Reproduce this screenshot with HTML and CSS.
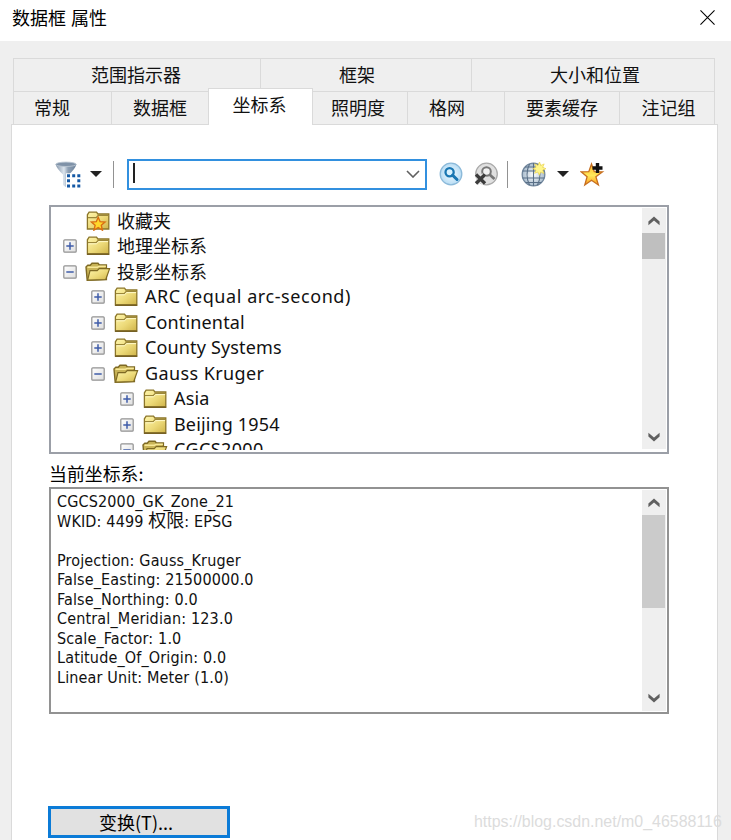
FILE: index.html
```html
<!DOCTYPE html>
<html lang="zh-CN">
<head>
<meta charset="utf-8">
<title>数据框 属性</title>
<link rel="stylesheet" href="styles.css">
</head>
<body>
<svg class="defs" width="0" height="0">
  <defs>
    <linearGradient id="gold" x1="0" y1="0" x2="1" y2="1"><stop offset="0" stop-color="#fff6ac"/><stop offset=".55" stop-color="#ecd978"/><stop offset="1" stop-color="#cfb348"/></linearGradient>
    <linearGradient id="metal"><stop offset="0" stop-color="#8495a9"/><stop offset=".4" stop-color="#dce5ee"/><stop offset=".6" stop-color="#8fa1b5"/><stop offset="1" stop-color="#6d829b"/></linearGradient>
    <linearGradient id="star" x1="0" y1="0" x2="0" y2="1"><stop offset="0" stop-color="#ffb928"/><stop offset=".55" stop-color="#ffe95b"/><stop offset="1" stop-color="#ff9c1c"/></linearGradient>
    <radialGradient id="blue"><stop offset="0" stop-color="#f3fbff"/><stop offset="1" stop-color="#b7dcf4"/></radialGradient>
    <radialGradient id="globe"><stop offset="0" stop-color="#ffffff"/><stop offset="1" stop-color="#a9bccd"/></radialGradient>
    <linearGradient id="box" x1="0" y1="0" x2="1" y2="1"><stop offset="0" stop-color="#fff"/><stop offset="1" stop-color="#dedede"/></linearGradient>
  </defs>
  <symbol id="folder" viewBox="0 0 26 20">
    <path d="M2.4 18V3.8L4.100 1.200h7.400l1.400 1.800h10.900V18z" fill="url(#gold)" stroke="#8c7628" stroke-width="1.3"/>
    <path d="M3 6.600h8.200l2-2.200h10" fill="none" stroke="#9b873a" stroke-width="1.2"/>
    <path d="M3.400 7.800h8.200l2-2.200h9.500" fill="none" stroke="#fff9c8"/>
    <path d="M2 18.200h22.200" stroke="#705b20" stroke-width="1.4"/>
  </symbol>
  <symbol id="folder-open" viewBox="0 0 26 20">
    <path d="M2.200 18.200L1 5 2.800 3.200h2.400L7 1.200h6l1.400 1.800h7v14.600z" fill="#c9b457" stroke="#7e6923" stroke-width="1.4"/>
    <path d="M2.5 5.200h10l2-1h6.400" fill="none" stroke="#f8e898" stroke-width="1.4"/>
    <path d="M2.600 18.200L5 8.600h7.200l2-2h10.400l-3.800 10.900z" fill="url(#gold)" stroke="#7e6923" stroke-width="1.2"/>
  </symbol>
  <symbol id="folder-star" viewBox="0 0 26 20">
    <path d="M2.400 18V3.800L4.100 1.200h7.400l1.400 1.800h10.900V18z" fill="url(#gold)" stroke="#8c7628" stroke-width="1.3"/>
    <path d="M3 6.600h8.200l2-2.200h10" fill="none" stroke="#9b873a" stroke-width="1.2"/>
    <path d="M13.200 6.200l1.900 4.500 4.900.4-3.700 3.200 1.100 4.800-4.200-2.600-4.200 2.600 1.100-4.800-3.700-3.200 4.900-.4z" fill="#ffd82b" stroke="#d96e12" stroke-width="1.400"/>
  </symbol>
  <symbol id="plus" viewBox="0 0 14 14">
    <rect x=".8" y=".8" width="12.400" height="12.400" rx="1" fill="url(#box)" stroke="#929292" stroke-width="1.200"/>
    <path d="M3.300 7h7.400M7 3.300v7.400" stroke="#3f5ca9" stroke-width="1.500"/>
  </symbol>
  <symbol id="minus" viewBox="0 0 14 14">
    <rect x=".8" y=".8" width="12.400" height="12.400" rx="1" fill="url(#box)" stroke="#929292" stroke-width="1.200"/>
    <path d="M3.300 7h7.400" stroke="#3f5ca9" stroke-width="1.500"/>
  </symbol>
  <symbol id="scroll-arrow" viewBox="0 0 12 10"><path d="M.4 9.300V5.600L6 .4l5.600 5.200v3.700L6 4.600z" fill="#606060"/></symbol>
</svg>

<header class="titlebar">
  <h1>数据框 属性</h1>
  <svg class="close" viewBox="0 0 16 16"><path d="M.5.5l15 15M15.5.5l-15 15" stroke="#000" stroke-width="1.150"/></svg>
</header>

<main class="dialog">
  <nav class="tabs tabs-top">
    <span class="tab tab-extent">范围指示器</span><span class="tab tab-frame">框架</span><span class="tab tab-size">大小和位置</span>
  </nav>
  <nav class="tabs tabs-bottom">
    <span class="tab tab-general">常规</span><span class="tab">数据框</span><span class="tab active">坐标系</span><span class="tab tab-light">照明度</span><span class="tab tab-grid">格网</span><span class="tab">要素缓存</span><span class="tab tab-notes">注记组</span>
  </nav>

  <section class="panel">
    <div class="toolbar">
      <svg class="filter" viewBox="0 0 26 27">
        <path d="M.6 3.500Q2 8 8 13.500V24q3 3 6 2V13.500Q20 8 21.400 3.500z" fill="url(#metal)"/>
        <ellipse cx="11" cy="3.300" rx="10.300" ry="2.200" fill="#7f92a8" stroke="#b9c5d1" stroke-width=".9"/>
        <rect x="11" y="12.300" width="15" height="14.700" fill="#fff"/>
        <path d="M12 13.200h3v3h-3zM17.200 13.200h3v3h-3zM22.300 13.200h3v3h-3zM12 18.300h3v3h-3zM22.300 18.300h3v3h-3zM12 23.400h3v3h-3zM17.200 23.400h3v3h-3zM22.300 23.400h3v3h-3z" fill="#1559a5"/>
      </svg>
      <svg class="drop drop-filter" viewBox="0 0 12 6"><path d="M0 0h12L6 6z" fill="#222"/></svg>
      <i class="divider"></i>
      <div class="combo">
        <i class="caret"></i>
        <svg viewBox="0 0 14 8"><path d="M1 1l6 6 6-6" fill="none" stroke="#606060" stroke-width="1.600"/></svg>
      </div>
      <svg class="search" viewBox="0 0 24 24">
        <circle cx="12" cy="12" r="10.800" fill="url(#blue)" stroke="#8bb9d9" stroke-width="1.300"/>
        <circle cx="10.600" cy="10.200" r="4.100" fill="#d9f2ff" stroke="#1976b2" stroke-width="2.300"/>
        <path d="M13.500 13.200l4.500 4.300" stroke="#1976b2" stroke-width="3" stroke-linecap="round"/>
      </svg>
      <svg class="search-clear" viewBox="0 0 24 24">
        <circle cx="12.500" cy="12" r="10.800" fill="#e0e0e0" stroke="#aaa" stroke-width="1.300"/>
        <circle cx="12.500" cy="9.500" r="4.300" fill="#f2f2f2" stroke="#777" stroke-width="2"/>
        <path d="M15.500 12.500l5 4.500" stroke="#777" stroke-width="2.800"/>
        <path d="M2.500 13l8 8.500M10.500 13l-8 8.500" stroke="#e8e8e8" stroke-width="5"/>
        <path d="M2 12.500l9 9M11 12.500l-9 9" stroke="#3c3c3c" stroke-width="3.400"/>
      </svg>
      <i class="divider second"></i>
      <svg class="world" viewBox="0 0 26 26">
        <circle cx="12.500" cy="13.500" r="11.300" fill="url(#globe)" stroke="#71869c" stroke-width="1.300"/>
        <path d="M1.500 10h22M1.500 17h22M4 6h17M4.500 21.500h16M12.500 2v23M8.500 3q-5 10.500 0 21M16.500 3q5 10.500 0 21" fill="none" stroke="#596f87" stroke-width="1.100"/>
        <path d="M18.500 1l1.300 3.400 3.400-1.500-1.500 3.400 3.300 1.400-3.300 1.400 1.300 3.400-3.300-1.500-1.400 3.200-1.400-3.200-3.300 1.300 1.400-3.300-3.200-1.300 3.300-1.400-1.500-3.400 3.400 1.500z" fill="#fff68b" stroke="#e9cf3f" stroke-width=".6"/>
      </svg>
      <svg class="drop drop-world" viewBox="0 0 12 6"><path d="M0 0h12L6 6z" fill="#222"/></svg>
      <svg class="favorite" viewBox="0 0 26 26">
        <path d="M11.500 3l2.800 7.600 8.200.2-6.600 5 2.500 8.200-6.900-4.700L4.800 24l2.300-8.200-6-5 7.700-.2z" fill="url(#star)" stroke="#c66e20" stroke-width="1.300"/>
        <path d="M17.500 2v10M12.500 7h10" stroke="#111" stroke-width="3.400"/>
      </svg>
    </div>

    <div class="tree">
      <ul>
        <li><i class="blank"></i><svg class="folder"><use href="#folder-star"/></svg><span>收藏夹</span></li>
        <li><svg class="toggle"><use href="#plus"/></svg><svg class="folder"><use href="#folder"/></svg><span>地理坐标系</span></li>
        <li><svg class="toggle"><use href="#minus"/></svg><svg class="folder"><use href="#folder-open"/></svg><span>投影坐标系</span></li>
        <li class="l2"><svg class="toggle"><use href="#plus"/></svg><svg class="folder"><use href="#folder"/></svg><span class="wide">ARC (equal arc-second)</span></li>
        <li class="l2"><svg class="toggle"><use href="#plus"/></svg><svg class="folder"><use href="#folder"/></svg><span>Continental</span></li>
        <li class="l2"><svg class="toggle"><use href="#plus"/></svg><svg class="folder"><use href="#folder"/></svg><span>County Systems</span></li>
        <li class="l2"><svg class="toggle"><use href="#minus"/></svg><svg class="folder"><use href="#folder-open"/></svg><span class="loose">Gauss Kruger</span></li>
        <li class="l3"><svg class="toggle"><use href="#plus"/></svg><svg class="folder"><use href="#folder"/></svg><span>Asia</span></li>
        <li class="l3"><svg class="toggle"><use href="#plus"/></svg><svg class="folder"><use href="#folder"/></svg><span>Beijing 1954</span></li>
        <li class="l3"><svg class="toggle"><use href="#minus"/></svg><svg class="folder"><use href="#folder-open"/></svg><span class="loose">CGCS2000</span></li>
      </ul>
      <div class="scrollbar"><svg><use href="#scroll-arrow"/></svg><i class="thumb"></i><svg class="down"><use href="#scroll-arrow"/></svg></div>
    </div>

    <h2>当前坐标系:</h2>
    <div class="details">
      <div class="text">
        <p>CGCS2000_GK_Zone_21</p>
        <p>WKID: 4499 <span class="cjk">权限</span>: EPSG</p>
        <p>&nbsp;</p>
        <p>Projection: Gauss_Kruger</p>
        <p>False_Easting: 21500000.0</p>
        <p>False_Northing: 0.0</p>
        <p>Central_Meridian: 123.0</p>
        <p>Scale_Factor: 1.0</p>
        <p>Latitude_Of_Origin: 0.0</p>
        <p>Linear Unit: Meter (1.0)</p>
      </div>
      <div class="scrollbar"><svg><use href="#scroll-arrow"/></svg><i class="thumb"></i><svg class="down"><use href="#scroll-arrow"/></svg></div>
    </div>
    <button>变换(T)...</button>
  </section>
</main>
<div class="watermark">https://blog.csdn.net/m0_46588116</div>
</body>
</html>
```
FILE: styles.css
```css
* { box-sizing: border-box; }
html, body { height: 840px; overflow: hidden; }
body {
  position: relative;
  margin: 0;
  background: #efefef;
  color: #111;
  font-family: "Noto Sans CJK SC", sans-serif;
  font-size: 18px;
}
svg, i { display: block; flex: none; }
.defs { position: absolute; }
h1, h2, p, ul { margin: 0; padding: 0; font-weight: 400; }

.titlebar {
  display: flex;
  justify-content: space-between;
  height: 41px;
  padding: 0 16px 0 12px;
  background: #fff;
}
h1 { font-size: 18px; line-height: 34px; color: #000; word-spacing: 1px; }
.close { width: 15px; height: 15px; margin-top: 10px; }

.dialog { padding: 17px 13px 0 11px; }
.tabs { display: grid; margin-left: 2px; width: 702px; }
.tabs-top { height: 33px; grid-template-columns: 248px 211px 243px; border-top: 1px solid #dadada; }
.tabs-bottom { height: 33px; grid-template-columns: 99px 97px 104px 95px 97px 115px 95px; }
.tab {
  border-right: 1px solid #dadada;
  text-align: center;
  line-height: 30px;
  white-space: nowrap;
}
.tab:first-child { border-left: 1px solid #dadada; }
.tabs-bottom .tab { border-top: 1px solid #dadada; }
.tab-extent { padding-right: 2px; }
.tab-frame { padding-right: 18px; }
.tab-size { padding-left: 4px; }
.tab-general { padding-right: 21px; }
.tab-grid { padding-right: 18px; }
.tab-light { padding-right: 4px; }
.tab-notes { padding-left: 3px; }
.tabs-bottom .active {
  height: 37px;
  margin: -3px 0 0 -1px;
  padding-right: 2px;
  background: #fff;
  border-left: 1px solid #dadada;
  position: relative;
}
.panel {
  height: 720px;
  padding: 33px 48px 0 36px;
  background: #fff;
  border: 1px solid #dadada;
}

.toolbar { display: flex; align-items: center; height: 32px; padding-left: 7px; }
.filter { width: 26px; height: 27px; }
.drop { width: 12px; height: 6px; }
.drop-filter { margin-left: 9px; }
.divider { width: 1px; height: 27px; margin: 0 13px 0 11px; background: #929292; }
.combo {
  display: flex;
  align-items: center;
  justify-content: space-between;
  width: 300px;
  height: 31px;
  padding: 0 5px 0 4px;
  border: 2px solid #3290df;
}
.combo svg { width: 14px; height: 8px; }
.caret { width: 2px; height: 20px; margin-bottom: 2px; background: #222; }
.search { width: 24px; height: 24px; margin-left: 12px; }
.search-clear { width: 24px; height: 24px; margin-left: 11px; }
.divider.second { margin: 0 13px 0 9px; }
.world { width: 26px; height: 26px; }
.drop-world { margin-left: 10px; }
.favorite { width: 26px; height: 26px; margin-left: 11px; }

.tree, .details {
  display: flex;
  justify-content: space-between;
  width: 620px;
  border: 2px solid #9b9fa7;
  overflow: hidden;
}
.tree { height: 249px; margin-top: 15px; padding-bottom: 2px; margin-left: 1px; }
.tree ul { height: 243px; overflow: hidden; list-style: none; padding-top: 1px; }
.tree li { display: flex; align-items: center; height: 25.500px; padding-left: 12px; white-space: nowrap; }
.tree .l2 { padding-left: 40px; }
.tree .l3 { padding-left: 69px; }
.toggle, .blank { width: 14px; height: 14px; }
.folder { width: 26px; height: 20px; margin: 0 6px 0 8px; }
.tree span { line-height: 25px; margin-top: -1px; }
.tree .l2 span, .tree .l3 span { font-family: "Noto Sans", sans-serif; font-size: 18px; letter-spacing: .15px; }
.tree .l2 .wide { letter-spacing: .57px; }
.tree li .loose.loose { letter-spacing: .4px; }

.scrollbar {
  display: flex;
  flex-direction: column;
  align-items: center;
  width: 24px;
  margin: 1px 1px 1px 0;
  padding: 8px 0 7px;
  background: #efefef;
}
.scrollbar svg { width: 12px; height: 10px; margin-right: 1px; }
.scrollbar .down { margin-top: auto; transform: rotate(180deg); }
.thumb { width: 23px; height: 26px; margin: 7px 1px 0 0; background: #bfbfbf; }
.details .thumb { height: 93px; background: #cbcbcb; }
.details .down { margin-bottom: 1px; }

h2 { height: 33px; padding-left: 1px; font-size: 17.900px; line-height: 38px; color: #000; }
.details { height: 227px; margin-left: 1px; border-color: #929292; }
.text {
  padding: 3px 0 0 6px;
  font-family: "DejaVu Sans Condensed", "DejaVu Sans", sans-serif;
  font-size: 16px;
  letter-spacing: .15px;
}
.text p { height: 19.500px; line-height: 19.500px; white-space: nowrap; }
.cjk { font-family: "Noto Sans CJK SC", sans-serif; font-size: 18px; line-height: 0; letter-spacing: 0; }
button {
  display: block;
  width: 182px;
  height: 32px;
  margin: 92px 0 0;
  padding: 0 6px 0 0;
  border: 3px solid #0b7bd7;
  background: #e1e1e1;
  color: #000;
  font: 18px/26px "Noto Sans CJK SC", sans-serif;
}
.watermark {
  position: absolute;
  top: 812px;
  left: 474px;
  font: 15.950px/20px "Liberation Sans", sans-serif;
  color: #dcdcdc;
  white-space: nowrap;
}
```
